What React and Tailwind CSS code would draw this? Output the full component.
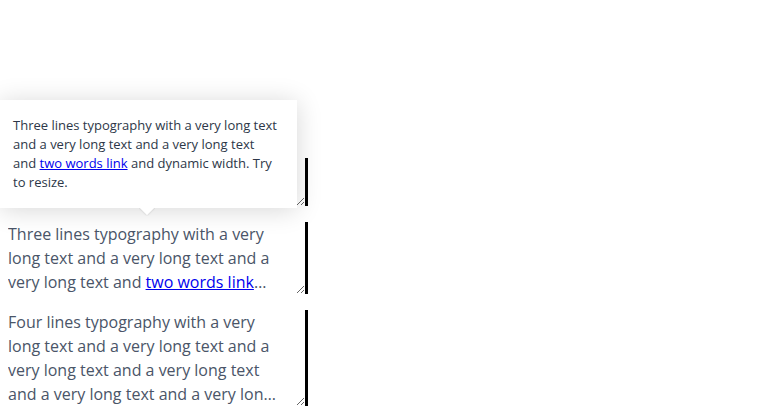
export default function App() {
  const box =
    "w-[308px] pl-2 pr-[28px] border-r-[3px] border-black resize overflow-hidden text-[16px] leading-6 text-[#4a5568]";
  return (
    <div className="relative w-[784px] h-[414px] bg-white overflow-hidden" style={{ fontFamily: '"Open Sans", sans-serif' }}>
      <div className="flex flex-col gap-4 pt-[158px]">
        <div className={box}>
          <p className="line-clamp-2">
            Two lines typography with a very long text and a very long text and a very long text and{" "}
            <a href="#" className="text-[#0000ee] underline">two words link</a> and dynamic width.
          </p>
        </div>
        <div className={box}>
          <p className="line-clamp-3">
            Three lines typography with a very long text and a very long text and a very long text and{" "}
            <a href="#" className="text-[#0000ee] underline">two words link</a> and dynamic width. Try to resize.
          </p>
        </div>
        <div className={box}>
          <p className="line-clamp-4">
            Four lines typography with a very long text and a very long text and a very long text and a very long text and a very long text and a very long text and{" "}
            <a href="#" className="text-[#0000ee] underline">two words link</a> and dynamic width.
          </p>
        </div>
      </div>
      <div className="absolute left-0 top-[100px] w-[297px] h-[108px] bg-white shadow-[0_2px_24px_rgba(0,0,0,0.16)] pl-[13px] pr-[18px] py-4 text-[13px] leading-[19px] text-[#2d3748]">
        Three lines typography with a very long text and a very long text and a very long text and{" "}
        <a href="#" className="text-[#0000ee] underline">two words link</a> and dynamic width. Try to resize.
        <div className="absolute left-[139px] -bottom-2 w-4 h-2 overflow-hidden">
          <div className="w-[11px] h-[11px] bg-white rotate-45 -translate-y-[6px] translate-x-[2.5px] shadow-[0_0_2px_rgba(0,0,0,0.2)]" />
        </div>
      </div>
    </div>
  );
}
